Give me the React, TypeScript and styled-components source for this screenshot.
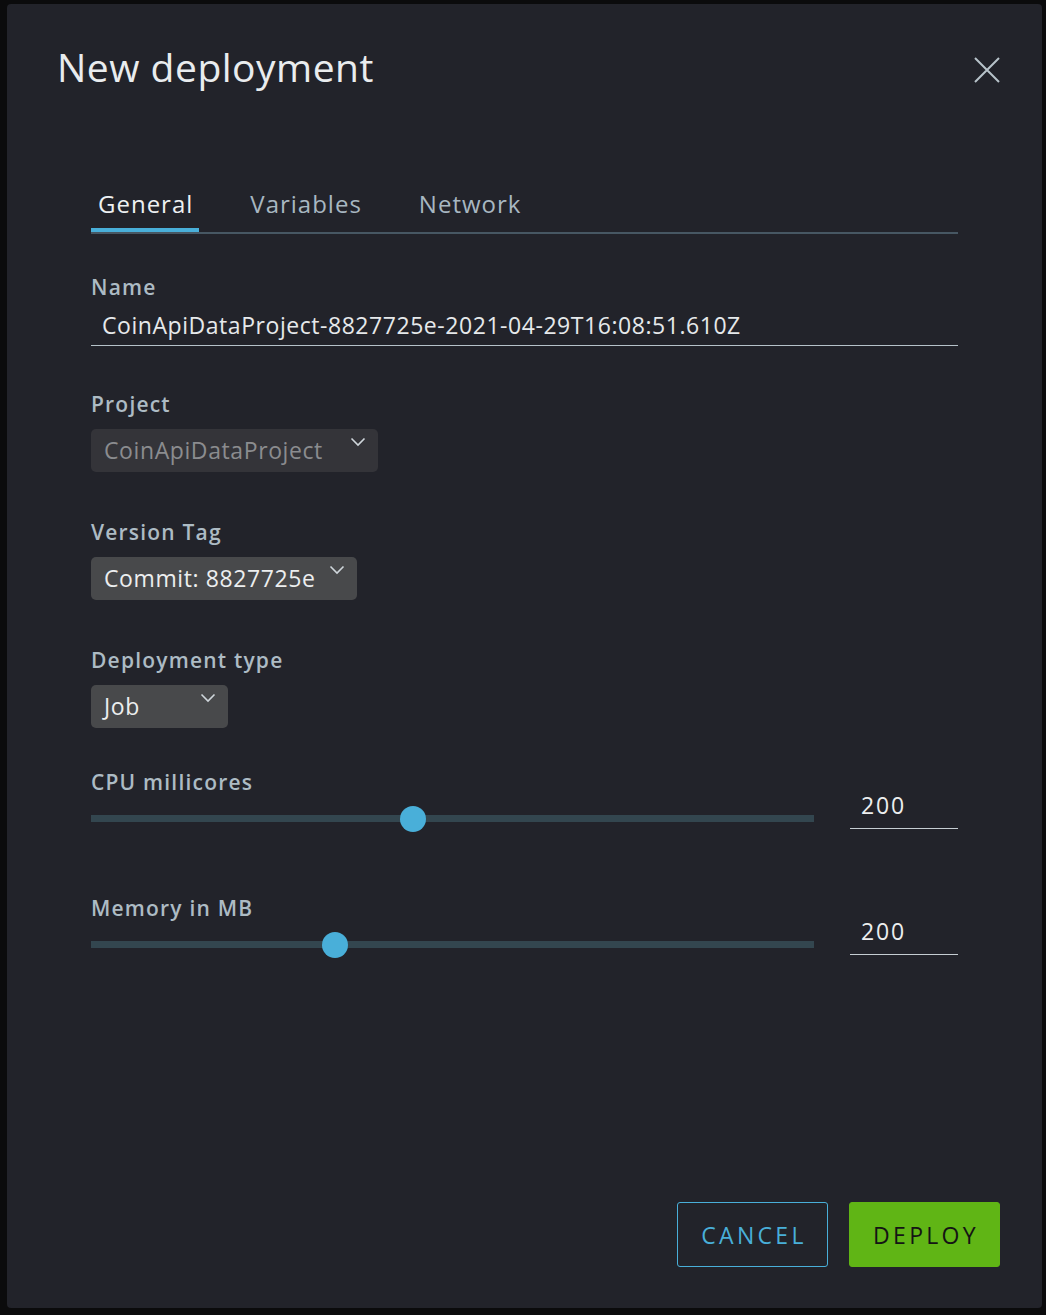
import React from "react";
import styled, { createGlobalStyle } from "styled-components";

const Global = createGlobalStyle`
  html, body { margin: 0; padding: 0; background: #0b0b0c; }
  body { font-family: "Open Sans", "Noto Sans", sans-serif; }
  * { box-sizing: border-box; }
`;

const Page = styled.div`
  width: 1046px;
  height: 1315px;
  padding: 4px 4px 7px 7px;
  background: #0b0b0c;
`;

const Modal = styled.div`
  width: 1035px;
  height: 1304px;
  background: #22232a;
  border-radius: 4px;
  display: flex;
  flex-direction: column;
  padding: 0 42px 41px 50px;
`;

const Header = styled.div`
  display: flex;
  align-items: flex-start;
  justify-content: space-between;
  padding-top: 37px;
`;

const Title = styled.h1`
  margin: 0;
  font-size: 39px;
  font-weight: 400;
  color: #e9ecee;
  letter-spacing: 0.5px;
  line-height: 52px;
`;

const CloseButton = styled.button`
  background: none;
  border: none;
  padding: 0;
  margin-top: 16px;
  width: 26px;
  height: 26px;
  display: flex;
  align-items: center;
  justify-content: center;
  cursor: pointer;
`;

const Body = styled.div`
  flex: 1;
  padding: 0 42px 0 34px;
  display: flex;
  flex-direction: column;
`;

const Tabs = styled.div`
  margin-top: 88px;
  display: flex;
  border-bottom: 2px solid #475763;
  height: 53px;
`;

const Tab = styled.div<{ $active?: boolean }>`
  font-size: 24px;
  letter-spacing: 1px;
  color: ${(p) => (p.$active ? "#eef1f3" : "#a8b7c1")};
  padding: 5px 6px 0 7px;
  margin-right: 44px;
  line-height: 36px;
  height: 51px;
  border-bottom: 4px solid ${(p) => (p.$active ? "#49afd9" : "transparent")};
  margin-bottom: -2px;
`;

const Field = styled.div<{ $mt: number }>`
  margin-top: ${(p) => p.$mt}px;
  display: flex;
  flex-direction: column;
  align-items: flex-start;
`;

const Label = styled.label`
  font-size: 21px;
  font-weight: 600;
  letter-spacing: 1.2px;
  color: #adbbc4;
  line-height: 28px;
`;

const TextInput = styled.div`
  align-self: stretch;
  margin-top: 9px;
  padding: 0 11px;
  font-size: 23px;
  letter-spacing: 0.55px;
  color: #e6e9eb;
  line-height: 30px;
  border-bottom: 1px solid #b6c2c9;
  height: 36px;
`;

const Select = styled.div<{ $disabled?: boolean; $w: number }>`
  margin-top: 11px;
  width: ${(p) => p.$w}px;
  height: 43px;
  border-radius: 5px;
  background: ${(p) => (p.$disabled ? "#343439" : "#48494b")};
  color: ${(p) => (p.$disabled ? "#8b8c8f" : "#eceeef")};
  font-size: 23px;
  letter-spacing: 0.6px;
  display: flex;
  align-items: flex-start;
  justify-content: space-between;
  padding: 0 12px 0 13px;
  line-height: 43px;
`;

const Chevron = styled.svg`
  margin-top: 8px;
  flex-shrink: 0;
`;

const SliderRow = styled.div`
  align-self: stretch;
  display: flex;
  align-items: flex-start;
  gap: 36px;
`;

const Track = styled.div`
  flex: 1;
  height: 7px;
  margin-top: 19px;
  background: #33464f;
  position: relative;
`;

const Thumb = styled.div`
  position: absolute;
  top: 50%;
  width: 26px;
  height: 26px;
  border-radius: 50%;
  background: #49afd9;
  transform: translate(-50%, -50%);
`;

const NumberBox = styled.div`
  width: 108px;
  height: 36px;
  margin-top: -3px;
  border-bottom: 1px solid #c5cdd2;
  font-size: 23px;
  letter-spacing: 1.8px;
  color: #eceeef;
  padding-left: 11px;
  line-height: 24px;
`;

const Footer = styled.div`
  display: flex;
  justify-content: flex-end;
  gap: 21px;
`;

const Button = styled.button<{ $primary?: boolean }>`
  width: 151px;
  height: 65px;
  border-radius: 3px;
  font-family: "Open Sans", "Noto Sans", sans-serif;
  font-size: 23px;
  letter-spacing: 3.3px;
  text-transform: uppercase;
  cursor: pointer;
  border: 1px solid ${(p) => (p.$primary ? "#60b515" : "#49afd9")};
  background: ${(p) => (p.$primary ? "#60b515" : "transparent")};
  color: ${(p) => (p.$primary ? "#141414" : "#49afd9")};
  padding: 0 0 0 3px;
`;

const ChevronIcon = () => (
  <Chevron width="16" height="10" viewBox="0 0 16 10">
    <path d="M1.5 1.5 L8 8 L14.5 1.5" fill="none" stroke="#cfd6db" strokeWidth="1.6" />
  </Chevron>
);

const Slider = ({ pct, value }: { pct: number; value: string }) => (
  <SliderRow>
    <Track>
      <Thumb style={{ left: `${pct}%` }} />
    </Track>
    <NumberBox>{value}</NumberBox>
  </SliderRow>
);

export default function App() {
  return (
    <>
      <Global />
      <Page>
        <Modal>
          <Header>
            <Title>New deployment</Title>
            <CloseButton aria-label="close">
              <svg width="26" height="26" viewBox="0 0 26 26">
                <path d="M1 1 L25 25 M25 1 L1 25" stroke="#b8c3ca" strokeWidth="2" fill="none" />
              </svg>
            </CloseButton>
          </Header>
          <Body>
            <Tabs>
              <Tab $active>General</Tab>
              <Tab>Variables</Tab>
              <Tab>Network</Tab>
            </Tabs>
            <Field $mt={39}>
              <Label>Name</Label>
              <TextInput>CoinApiDataProject-8827725e-2021-04-29T16:08:51.610Z</TextInput>
            </Field>
            <Field $mt={44}>
              <Label>Project</Label>
              <Select $disabled $w={287}>
                CoinApiDataProject
                <ChevronIcon />
              </Select>
            </Field>
            <Field $mt={46}>
              <Label>Version Tag</Label>
              <Select $w={266}>
                Commit: 8827725e
                <ChevronIcon />
              </Select>
            </Field>
            <Field $mt={46}>
              <Label>Deployment type</Label>
              <Select $w={137}>
                Job
                <ChevronIcon />
              </Select>
            </Field>
            <Field $mt={40}>
              <Label>CPU millicores</Label>
              <Slider pct={44.6} value="200" />
            </Field>
            <Field $mt={65}>
              <Label>Memory in MB</Label>
              <Slider pct={33.8} value="200" />
            </Field>
          </Body>
          <Footer>
            <Button>Cancel</Button>
            <Button $primary>Deploy</Button>
          </Footer>
        </Modal>
      </Page>
    </>
  );
}
